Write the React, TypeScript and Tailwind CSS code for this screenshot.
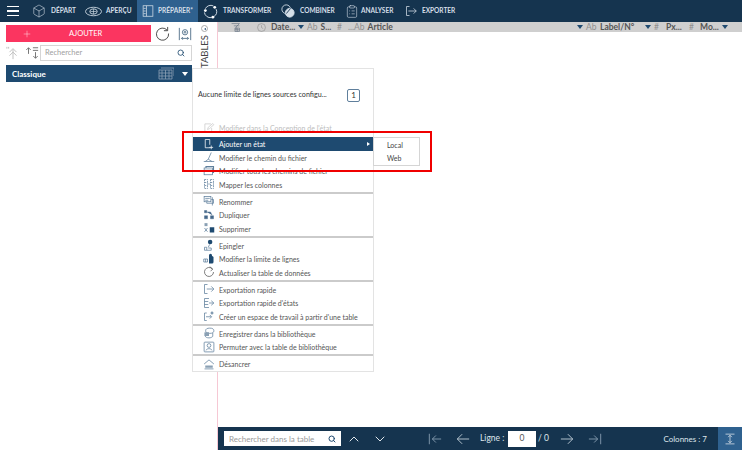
import { ChevronUp, ChevronDown, Search, Box, ClipboardList, Plus } from 'lucide-react';

const Ico = ({ size = 12, color = '#5f7f9c', sw = 1, vb = 16, className = '', children }: { size?: number; color?: string; sw?: number; vb?: number; className?: string; children: React.ReactNode }) => (
  <svg width={size} height={size} viewBox={`0 0 ${vb} ${vb}`} fill="none" stroke={color} strokeWidth={sw} className={`shrink-0 ${className}`}>
    {children}
  </svg>
);

const NavItem = ({ icon, label, w, box, active }: { icon: React.ReactNode; label: string; w: string; box: string; active?: boolean }) => (
  <div className={`flex items-center shrink-0 h-full pl-[5px] ${w} ${active ? 'bg-[#2f618f]' : ''}`}>
    <div className={`flex items-center shrink-0 ${box}`}>{icon}</div>
    <span className="text-[6.500px] font-bold text-[#d5dfe8] whitespace-nowrap">{label}</span>
  </div>
);

const Arrow = () => <span className="w-0 h-0 border-x-[3px] border-x-transparent border-t-[4px] border-t-[#1f4a70]" />;

const ColHead = ({ w, type, label, arrow, after }: { w: string; type?: string; label?: string; arrow?: boolean; after?: boolean }) => (
  <div className={`flex items-center gap-[3px] shrink-0 ${w}`}>
    {arrow && !after && <Arrow />}
    {type && <span className="text-[8.500px] text-[#909090]">{type}</span>}
    {label && <span className="text-[8.500px] font-bold text-[#555]">{label}</span>}
    {arrow && after && <Arrow />}
  </div>
);

type Item = { label: string; icon: React.ReactNode; disabled?: boolean; active?: boolean };

const groups: Item[][] = [
  [
    { label: "Modifier dans la Conception de l'état", disabled: true, icon: <Ico color="#c9c9c9"><path d="M2.500 2.500h8M2.500 2.500v11h9V8M6 10l1-3 6-5 1.500 1.500-6 5.500z" /></Ico> },
    { label: 'Ajouter un état', active: true, icon: <Ico color="#fff"><path d="M3 2v11h7M3 2h6v7M11 10v5M8.500 12.500h5" /></Ico> },
    { label: 'Modifier le chemin du fichier', icon: <Ico><path d="M1 14h14M3 14l4-3M11 2l-4 9 5 3" /></Ico> },
    { label: 'Modifier tous les chemins de fichier', icon: <Ico><rect x="1.500" y="4" width="11" height="9" /><path d="M4 4V2h10v8h-1.500M1.500 7h11" strokeWidth={1.500} /></Ico> },
    { label: 'Mapper les colonnes', icon: <Ico><path d="M2 2h4v12H2zM10 2h4v12h-4zM2 6h4M2 10h4M10 6h4M10 10h4M7 8h2" strokeDasharray="2 1" /></Ico> },
  ],
  [
    { label: 'Renommer', icon: <Ico><rect x="1.500" y="2" width="9" height="7" /><path d="M3 4.500h6M3 7h4M11 6h3v5H5v-2M12.500 3v11" /></Ico> },
    { label: 'Dupliquer', icon: <Ico><path d="M2 2h3v3H2zM10 9h4v4h-4zM2 9h4v4H2zM5 4h5l2 4" fill="#46688a" stroke="#46688a" strokeWidth={0.600} /></Ico> },
    { label: 'Supprimer', icon: <Ico><path d="M2 1.500h4v4H2z" fill="#8aa0b4" stroke="none" /><path d="M9 7h6v7H9z" fill="#1e4a70" stroke="none" /><path d="M2 8l4 5M6 8l-4 5" /></Ico> },
  ],
  [
    { label: 'Epingler', icon: <Ico><circle cx="9.500" cy="4" r="3" fill="#1e4a70" stroke="none" /><path d="M9 7L7 11M2 11h3v4H2zM7 12h4v3H5" /></Ico> },
    { label: 'Modifier la limite de lignes', icon: <Ico><path d="M8 4h4a2 2 0 012 2v6a2 2 0 01-2 2H8z" fill="#1e4a70" stroke="none" /><circle cx="10" cy="3" r="2" fill="#1e4a70" stroke="none" /><path d="M1 8h5v4H1zM3.500 8v4" /></Ico> },
    { label: 'Actualiser la table de données', icon: <Ico color="#555"><path d="M12.500 4A6 6 0 1 0 14 8" /><path d="M9 1l4 3-3 3" /></Ico> },
  ],
  [
    { label: 'Exportation rapide', icon: <Ico><path d="M6 2H2v12h4M5 8h9M11 4.500L14.500 8 11 11.500" /></Ico> },
    { label: "Exportation rapide d'états", icon: <Ico><path d="M8 2H2v12h6M2 6h5M2 10h5M8 8h6M11 5l3.500 3-3.500 3" /></Ico> },
    { label: "Créer un espace de travail à partir d'une table", icon: <Ico><path d="M5 4H2v10h3M4 9h7M9 6.500L11.500 9 9 11.500" /><path d="M12 2v4M10 4h4" strokeWidth={1.500} /></Ico> },
  ],
  [
    { label: 'Enregistrer dans la bibliothèque', icon: <Ico><ellipse cx="9" cy="5" rx="5.500" ry="3.500" /><path d="M3 8v4c0 1.500 2.500 2.500 5 2.500s4-1 5-2V8" /><rect x="2" y="7" width="6" height="5" fill="#8aa0b4" stroke="none" /></Ico> },
    { label: 'Permuter avec la table de bibliothèque', icon: <Ico><rect x="1.500" y="1.500" width="13" height="13" rx="1" /><circle cx="8" cy="6" r="2.500" /><path d="M4 12.500c1-3 7-3 8 0" /></Ico> },
  ],
  [{ label: 'Désancrer', icon: <Ico><path d="M1.500 8L8 2.500 14.500 8M2 14.500h12" /><path d="M3 10h10v3H3z" fill="#8aa0b4" stroke="none" /></Ico> }],
];

const App = () => (
  <div className="relative w-[742px] h-[450px] overflow-hidden bg-white flex flex-col font-['Lato',sans-serif]">
    {/* top bar */}
    <header className="h-[22px] shrink-0 bg-[#15344f] flex items-center">
      <div className="w-[27px] shrink-0 flex flex-col items-center gap-[3px] pr-[1px]">
        <span className="w-[12px] h-[1.500px] bg-white" />
        <span className="w-[12px] h-[1.500px] bg-white" />
        <span className="w-[12px] h-[1.500px] bg-white" />
      </div>
      <div className="flex items-center h-full">
        <NavItem w="w-[53px]" box="w-[19px]" label="DÉPART" icon={<Box className="w-[14px] h-[14px] text-[#d5dfe8]" strokeWidth={1} />} />
        <NavItem w="w-[57px]" box="w-[21px]" label="APERÇU" icon={
          <Ico size={17} color="#d5dfe8" sw={0.800}><ellipse cx="8" cy="8" rx="7.500" ry="4" /><ellipse cx="8" cy="8" rx="3.500" ry="2.500" /><path d="M5 8h6M8 5.500v5" strokeWidth={0.600} /></Ico>
        } />
        <NavItem active w="w-[61px]" box="w-[16px]" label="PRÉPARER*" icon={
          <Ico size={12} color="#d5dfe8"><rect x="1.500" y="1" width="13" height="14" /><path d="M6 1v14M2 4.500h3M2 8h3M2 11.500h3" /></Ico>
        } />
        <NavItem w="w-[78px]" box="w-[20px]" label="TRANSFORMER" icon={
          <Ico size={15} color="#d5dfe8"><path d="M2.500 5A6.500 6.500 0 0 1 11 2M14 5.500A6.500 6.500 0 0 1 11.500 13.500M9 14.500A6.500 6.500 0 0 1 1.500 9" /><circle cx="2.500" cy="7" r="1.500" fill="#fff" stroke="none" /><circle cx="12.500" cy="3.500" r="1.500" fill="#fff" stroke="none" /><circle cx="10.500" cy="14" r="1.500" fill="#fff" stroke="none" /></Ico>
        } />
        <NavItem w="w-[64px]" box="w-[19px]" label="COMBINER" icon={
          <Ico size={14} color="#d5dfe8"><circle cx="6" cy="6" r="5" /><circle cx="10" cy="10" r="5" fill="#d5dfe8" /><path d="M6 11l5-6" stroke="#15344f" /></Ico>
        } />
        <NavItem w="w-[60px]" box="w-[16px]" label="ANALYSER" icon={<ClipboardList className="w-[14px] h-[15px] text-[#d5dfe8]" strokeWidth={1} />} />
        <NavItem w="w-[60px]" box="w-[17px]" label="EXPORTER" icon={
          <Ico size={12} color="#d5dfe8"><path d="M6 2H2v12h4M4.500 8H15M11.500 4.500L15 8l-3.500 3.500" /></Ico>
        } />
      </div>
    </header>

    <div className="flex flex-1 min-h-0">
      {/* left panel */}
      <aside className="w-[192px] shrink-0 pl-[6px] pt-[3px] flex flex-col">
        <div className="flex items-center">
          <div className="w-[148px] h-[17px] bg-[#fb3560] flex items-center text-white">
            <Plus className="w-[10px] h-[10px] ml-[16px]" strokeWidth={1} />
            <span className="ml-[37px] text-[7.500px]">AJOUTER</span>
          </div>
          <Ico size={15} color="#444" className="ml-[4px]"><path d="M13 4.500A6.500 6.500 0 1 0 14.500 8" /><path d="M13.500 1v4h-4" /></Ico>
          <Ico size={14} color="#4a6a85" className="ml-[8px]"><path d="M1.500 1v14M14.500 1v14M4 13h8M4 13l1.500-1.500M4 13l1.500 1.500M12 13l-1.500-1.500M12 13l-1.500 1.500" /><circle cx="8" cy="6" r="3" /><circle cx="8" cy="6" r="1" /></Ico>
        </div>
        <div className="flex items-center mt-[3px] h-[16px]">
          <div className="w-[34px] flex items-center gap-[5px]">
            <Ico size={14} color="#b8b8b8"><path d="M8 15V4M4 7l4-4 4 4M4 11l4-4 4 4M1 1v2M3 1v2" /></Ico>
            <Ico size={14} color="#666"><path d="M4 2v7M1.500 4.500L4 2l2.500 2.500M12 7v7M9.500 11.500L12 14l2.500-2.500M9 2h6M9 5h6" /></Ico>
          </div>
          <div className="w-[152px] h-[16px] border border-[#d5d5d5] flex items-center justify-between pl-[4px] pr-[6px]">
            <span className="text-[7.500px] text-[#a0a0a0]">Rechercher</span>
            <Search className="w-[8px] h-[8px] text-[#1f4a70]" strokeWidth={2.500} />
          </div>
        </div>
        <div className="mt-[4px] w-[186px] h-[17px] bg-[#1e4a70] flex items-center justify-between pl-[6px] pr-[4px]">
          <span className="text-[8px] font-bold text-white">Classique</span>
          <div className="flex items-center gap-[8px]">
            <Ico size={16} color="#8aa0b4" sw={0.800}><path d="M1 4h13v9H1zM1 7h13M1 10h13M4 4v9M7.500 4v9M11 4v9M3 2h13v8" /></Ico>
            <span className="w-0 h-0 border-x-[3.500px] border-x-transparent border-t-[4px] border-t-white" />
          </div>
        </div>
      </aside>

      {/* tables strip */}
      <div className="w-[26px] shrink-0 flex flex-col items-center pt-[3px] border-r border-r-[#f6c8d4]">
        <div className="w-[7px] h-[7px] rounded-full border border-[#aaa] flex items-center justify-center mb-[3px]">
          <span className="w-0 h-0 border-y-[1.500px] border-y-transparent border-r-[2px] border-r-[#1e4a70]" />
        </div>
        <span className="text-[9.500px] leading-none text-[#444] [writing-mode:vertical-rl] rotate-180">TABLES</span>
      </div>

      {/* grid */}
      <main className="flex-1 min-w-0 flex flex-col">
        <div className="h-[10px] bg-[#cfcfcf] flex items-center">
          <div className="w-[39px] shrink-0 h-full flex items-center pl-[13px]">
            <Ico size={9} color="#567"><path d="M1 1h14L9 7v4M5 5h10M7 9h8v6H7zM7 12h8M11 9v6" /></Ico>
          </div>
          <div className="w-[14px] shrink-0">
            <Ico size={9} color="#8a8a8a"><circle cx="8" cy="8" r="7" /><path d="M8 4v4l3 2" /></Ico>
          </div>
          <ColHead w="w-[36px]" label="Date..." arrow after />
          <ColHead w="w-[30px]" type="Ab" label="S..." />
          <ColHead w="w-[11px]" type="#" />
          <ColHead w="w-[229px]" type="...Ab" label="Article" />
          <ColHead w="w-[23px]" arrow type="Ab" />
          <ColHead w="w-[45px]" label="Label/N°" />
          <ColHead w="w-[21px]" arrow type="#" />
          <ColHead w="w-[23px]" label="Px..." />
          <ColHead w="w-[11px]" type="#" />
          <ColHead w="w-[30px]" label="Mo..." arrow after />
        </div>
        <div className="flex-1" />
        <div className="h-[23px] bg-[#15344f] flex items-center text-[#dfe6ec]">
          <div className="ml-[6px] w-[117px] h-[15px] bg-white flex items-center justify-between px-[5px] shrink-0">
            <span className="text-[8px] text-[#9a9a9a]">Rechercher dans la table</span>
            <Search className="w-[8px] h-[8px] text-[#1f4a70]" strokeWidth={3} />
          </div>
          <ChevronUp className="w-[16px] h-[16px] ml-[5px]" strokeWidth={1.500} />
          <ChevronDown className="w-[16px] h-[16px] ml-[10px]" strokeWidth={1.500} />
          <Ico size={14} color="#8aa0b4" className="ml-[40px]"><path d="M1.500 2v12M15 8H5M9 4L5 8l4 4" /></Ico>
          <Ico size={14} color="#c6d2dc" className="ml-[14px]"><path d="M15 8H1.500M7 2.500L1.500 8 7 13.500" /></Ico>
          <span className="text-[8.500px] ml-[10px] w-[28px] whitespace-nowrap">Ligne :</span>
          <div className="w-[28px] h-[16px] bg-white text-[8.500px] text-[#555] flex items-center justify-center">0</div>
          <span className="text-[8.500px] ml-[2px] w-[13px]">/ 0</span>
          <Ico size={14} color="#c6d2dc" className="ml-[9px]"><path d="M1 8h13.500M9 2.500L14.500 8 9 13.500" /></Ico>
          <Ico size={14} color="#8aa0b4" className="ml-[14px]"><path d="M1 8h10M7 4l4 4-4 4M14.500 2v12" /></Ico>
          <span className="text-[8px] ml-auto mr-[11px]">Colonnes : 7</span>
          <div className="w-[24px] h-full bg-[#2f618f] flex items-center justify-center">
            <Ico size={12} color="#dfe6ec"><path d="M2 1.500h12M2 14.500h12M8 3v10M5.500 5.500L8 3l2.500 2.500M5.500 10.500L8 13l2.500-2.500" /></Ico>
          </div>
        </div>
      </main>
    </div>

    {/* context menu */}
    <div className="absolute left-[192px] top-[68px] w-[182px] h-[304px] bg-white border border-[#e3e3e3] flex flex-col">
      <div className="h-[52px] shrink-0 flex items-center justify-between pl-[5px] pr-[13px]">
        <span className="text-[7.200px] text-[#333] whitespace-nowrap">Aucune limite de lignes sources configu...</span>
        <div className="w-[13px] h-[13px] border border-[#5f7f9c] rounded-[2px] flex items-center justify-center text-[8px] text-[#333]">1</div>
      </div>
      {groups.map((group, i) => (
        <div key={i} className={i > 0 ? 'border-t-2 border-t-[#cbcbcb] pt-[1px] mt-[0.500px]' : ''}>
          {group.map((item) => (
            <div key={item.label} className={`relative flex items-center pl-[10px] text-[7px] whitespace-nowrap ${item.active ? 'h-[14px] mt-[2px] bg-[#1e4a70] text-white' : item.disabled ? 'h-[13.500px] text-[#bdbdbd]' : 'h-[13.500px] text-[#555]'}`}>
              <span className="w-[16px] flex items-center">{item.icon}</span>
              <span className="pt-px">{item.label}</span>
              {item.active && <span className="absolute right-[3px] w-0 h-0 border-y-[2.500px] border-y-transparent border-l-[3px] border-l-white" />}
            </div>
          ))}
        </div>
      ))}
    </div>

    {/* sub menu */}
    <div className="absolute left-[373px] top-[137px] w-[47px] h-[29px] bg-white border border-[#d5d5d5] flex flex-col justify-center pl-[13px] text-[7px] text-[#444]">
      <div className="h-[14px] flex items-center">Local</div>
      <div className="h-[14px] flex items-center">Web</div>
    </div>

    {/* annotation */}
    <div className="absolute left-[182px] top-[131px] w-[250px] h-[41px] border-2 border-[#f00000]" />
  </div>
);

export default App;
